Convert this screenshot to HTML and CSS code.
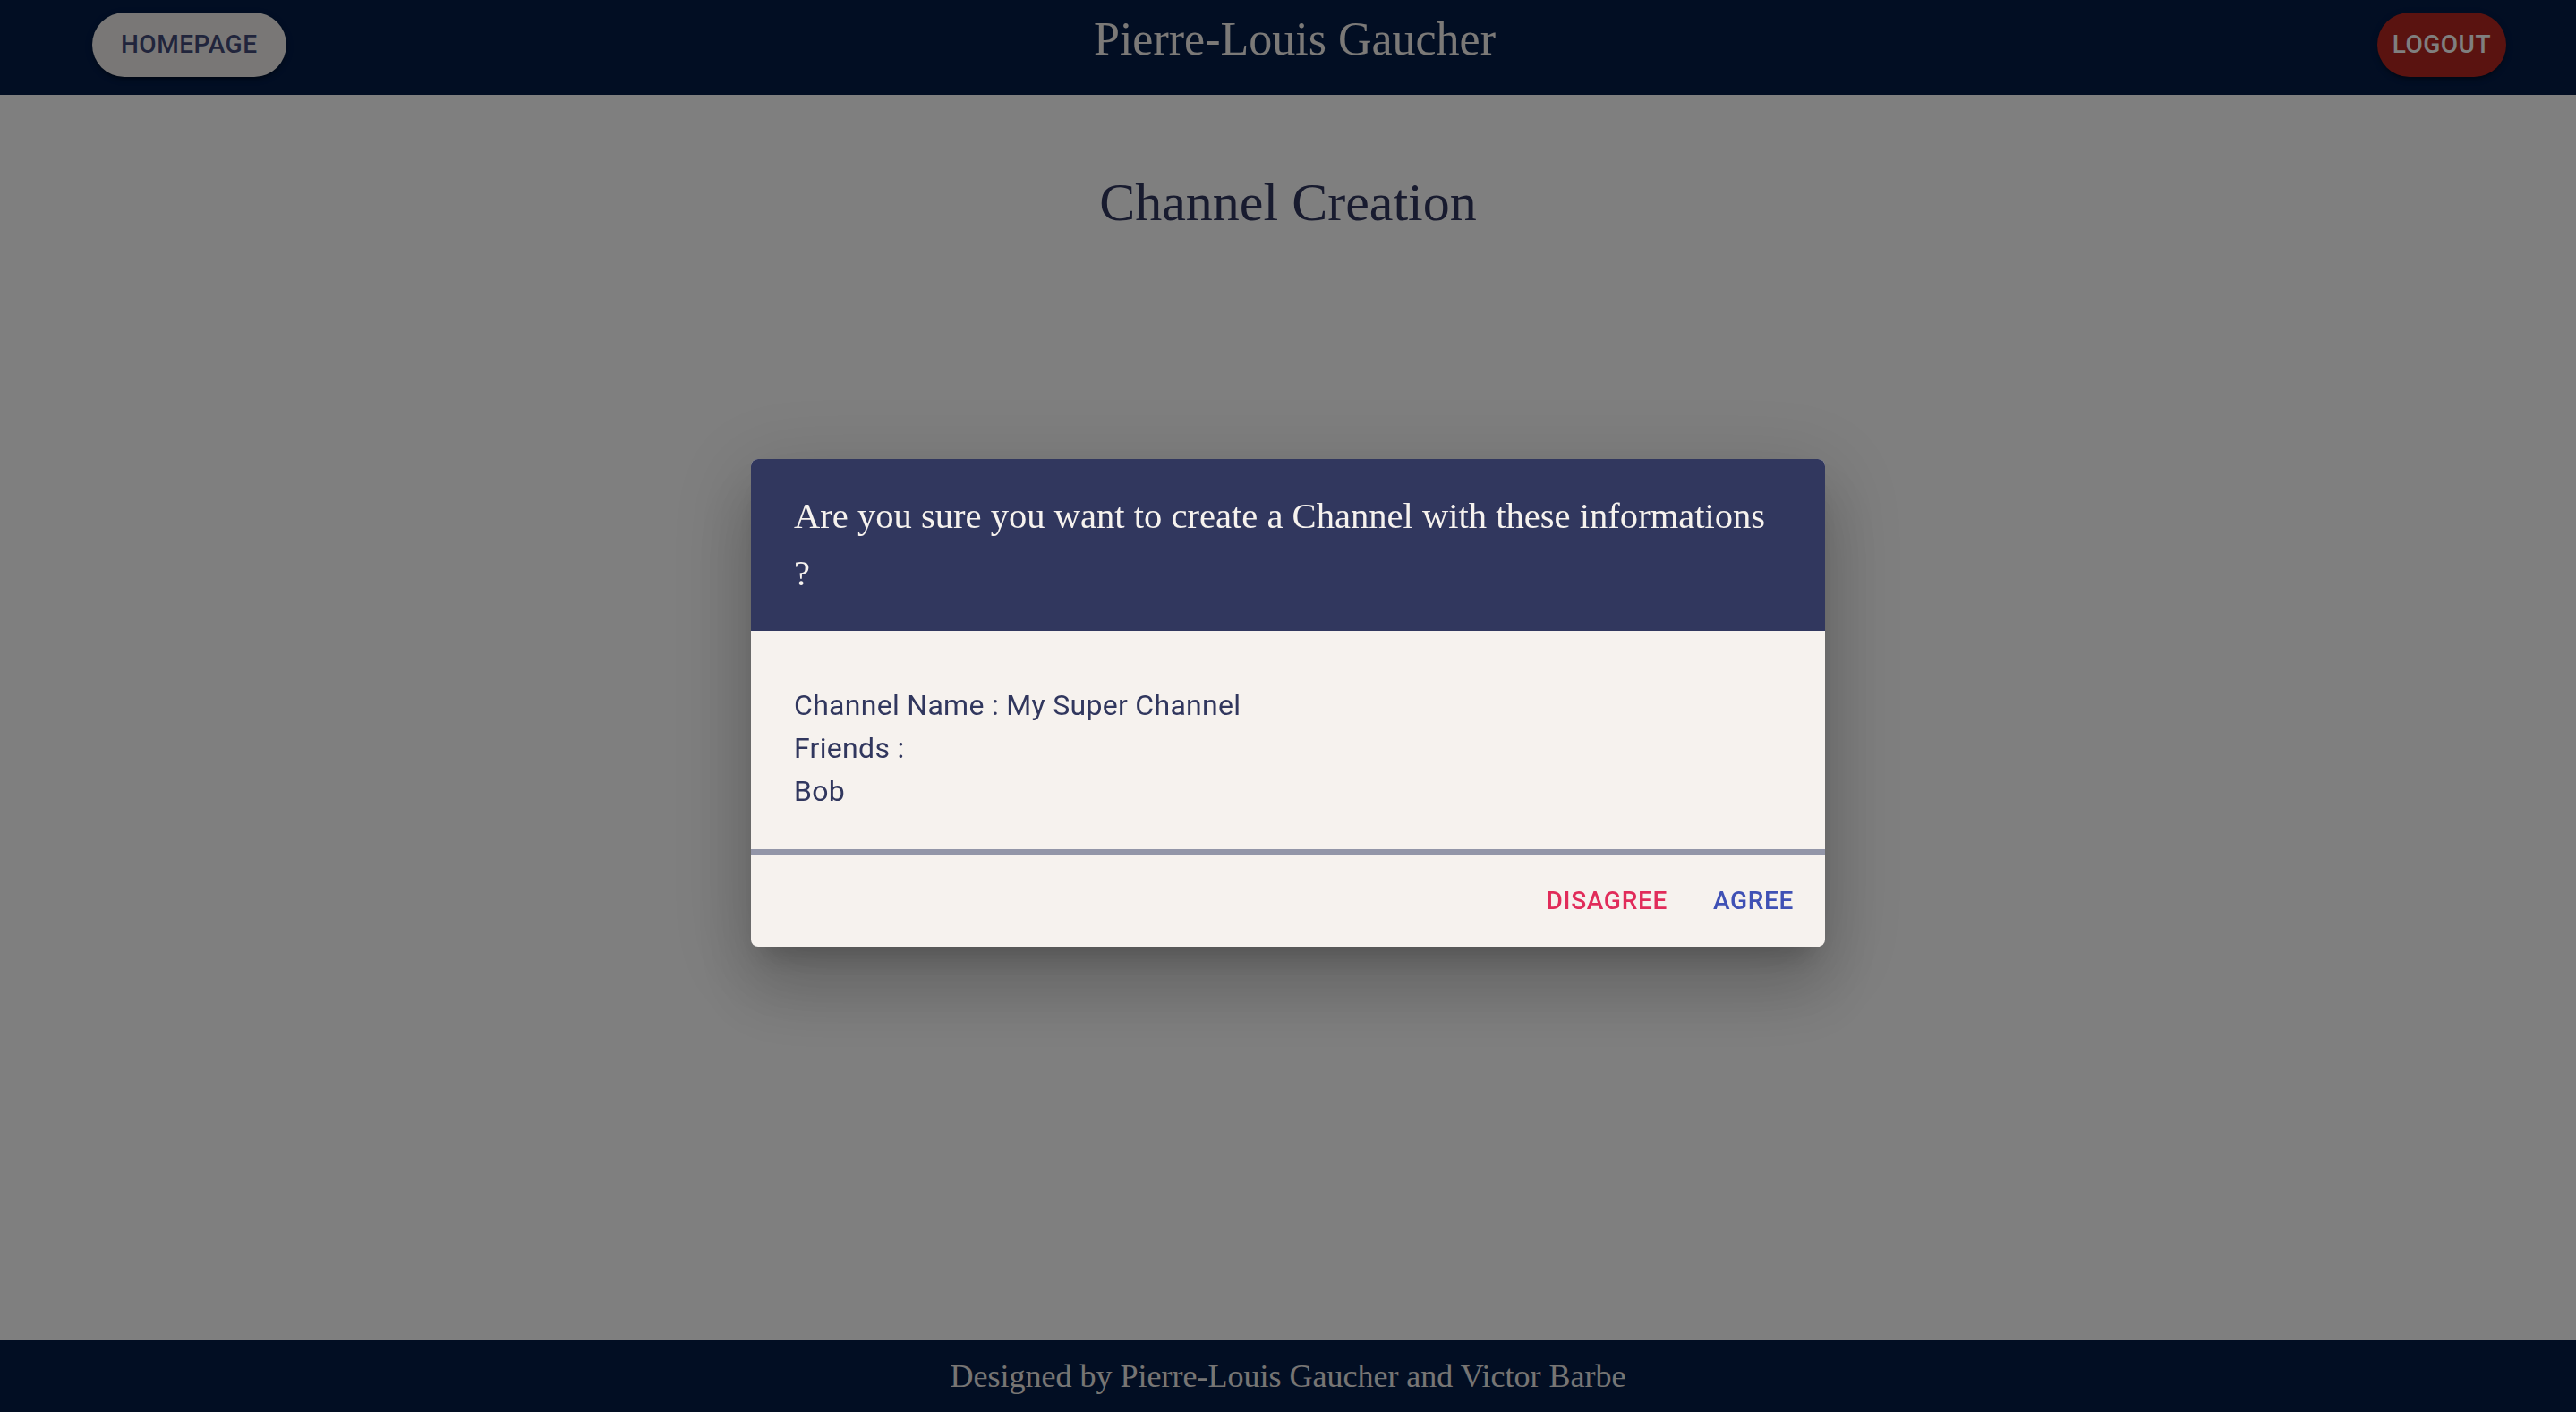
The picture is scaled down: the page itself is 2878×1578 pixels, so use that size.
FILE: index.html
```html
<!DOCTYPE html>
<html lang="en">
<head>
<meta charset="utf-8">
<title>Channel Creation</title>
<link rel="stylesheet" href="styles.css">
</head>
<body>
  <header class="topbar">
    <div class="topbar-left">
      <button class="btn btn-home">Homepage</button>
    </div>
    <div class="site-title">Pierre-Louis Gaucher</div>
    <div class="topbar-right">
      <button class="btn btn-logout">Logout</button>
    </div>
  </header>

  <main class="main">
    <h1 class="page-title">Channel Creation</h1>
  </main>

  <footer class="footer">Designed by Pierre-Louis Gaucher and Victor Barbe</footer>

  <div class="backdrop">
    <div class="dialog" role="dialog">
      <div class="dialog-title">Are you sure you want to create a Channel with these informations ?</div>
      <div class="dialog-content">
        <div class="line">Channel Name : My Super Channel</div>
        <div class="line">Friends :</div>
        <div class="line">Bob</div>
      </div>
      <div class="dialog-actions">
        <button class="text-btn text-btn-disagree">Disagree</button>
        <button class="text-btn text-btn-agree">Agree</button>
      </div>
    </div>
  </div>
</body>
</html>
```

FILE: styles.css
```css
* { box-sizing: border-box; }

html, body {
  margin: 0;
  padding: 0;
  height: 100%;
}

body {
  display: flex;
  flex-direction: column;
  min-height: 100vh;
  background: #ffffff;
  font-family: "Liberation Serif", "Times New Roman", serif;
}

.topbar {
  height: 106px;
  flex: 0 0 106px;
  background: #041c47;
  display: grid;
  grid-template-columns: 1fr auto 1fr;
  align-items: start;
  padding: 14px 78px 0 93px;
}

.topbar-left { justify-self: start; padding-left: 10px; }
.topbar-right { justify-self: end; }

.site-title {
  font-size: 52px;
  line-height: 60px;
  color: #f6f2ee;
  white-space: nowrap;
}

.btn {
  font-family: Roboto, "Liberation Sans", sans-serif;
  font-weight: 500;
  font-size: 28px;
  letter-spacing: 0.5px;
  text-transform: uppercase;
  line-height: 50px;
  height: 72px;
  border: none;
  border-radius: 36px;
  cursor: pointer;
  box-shadow: 0 6px 2px -4px rgba(0,0,0,0.2), 0 4px 4px 0 rgba(0,0,0,0.14), 0 2px 10px 0 rgba(0,0,0,0.12);
}

.btn-home {
  background: #f2efec;
  color: #434a78;
  padding: 11px 32px;
}

.btn-logout {
  background: #b52720;
  color: #ffffff;
  padding: 11px 17px;
}

.main {
  flex: 1 1 auto;
  display: flex;
  flex-direction: column;
  align-items: center;
}

.page-title {
  margin: 86px 0 0;
  font-weight: 400;
  font-size: 60px;
  line-height: 69px;
  color: #31375e;
}

.footer {
  flex: 0 0 80px;
  height: 80px;
  background: #041c47;
  color: #eeebe8;
  font-size: 36px;
  display: flex;
  align-items: center;
  justify-content: center;
}

.backdrop {
  position: fixed;
  inset: 0;
  background: rgba(0, 0, 0, 0.5);
  display: flex;
  align-items: center;
  justify-content: center;
  padding-bottom: 7px;
}

.dialog {
  width: 1200px;
  background: #f6f2ee;
  border-radius: 8px;
  overflow: hidden;
  box-shadow: 0 22px 30px -14px rgba(0,0,0,0.2), 0 48px 76px 6px rgba(0,0,0,0.14), 0 18px 92px 16px rgba(0,0,0,0.12);
}

.dialog-title {
  background: #31375e;
  color: #f6f2ee;
  font-size: 40.6px;
  line-height: 64px;
  padding: 32px 48px;
}

.dialog-content {
  padding: 59px 48px 41px;
  border-bottom: 6px solid #9396a8;
  font-family: Roboto, "Liberation Sans", sans-serif;
  font-size: 32px;
  line-height: 48px;
  letter-spacing: 0.3px;
  color: #31375e;
}

.dialog-actions {
  display: flex;
  justify-content: flex-end;
  align-items: center;
  gap: 16px;
  padding: 15px 16px;
}

.text-btn {
  font-family: Roboto, "Liberation Sans", sans-serif;
  font-weight: 500;
  font-size: 28px;
  letter-spacing: 0.7px;
  text-transform: uppercase;
  line-height: 49px;
  padding: 12px 16px;
  min-width: 128px;
  background: transparent;
  border: none;
  border-radius: 8px;
  cursor: pointer;
}

.text-btn-disagree { color: #e12c5a; }
.text-btn-agree { color: #3f51b5; }
```
